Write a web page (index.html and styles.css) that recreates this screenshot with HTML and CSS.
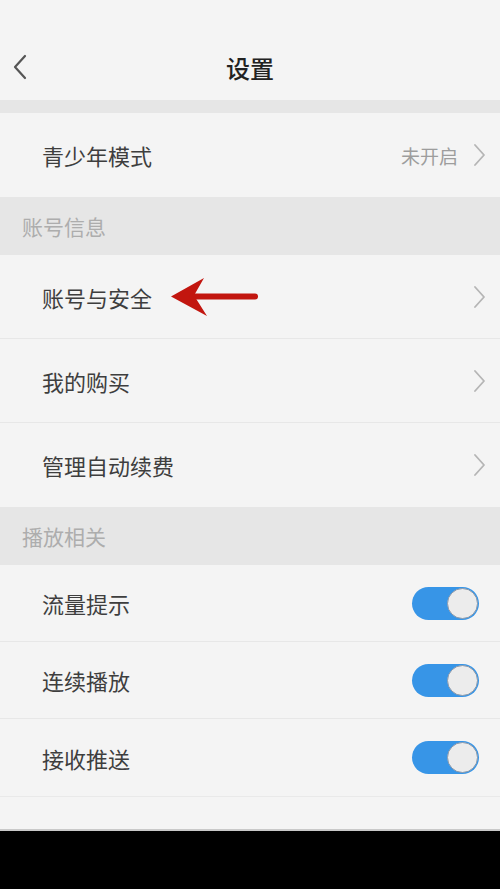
FILE: index.html
```html
<!doctype html>
<html lang="zh-CN">
    <head>
        <meta charset="UTF-8" />
        <meta name="viewport" content="width=device-width, initial-scale=1.0" />
        <title>设置</title>
        <link rel="stylesheet" href="styles.css">
    </head>
    <body>
        <header class="topbar">
            <button class="back" aria-label="返回">
                <svg viewBox="0 0 16 26" width="16" height="26">
                    <path d="M13 2 3 13l10 11" fill="none" stroke="#555" stroke-width="2.2" stroke-linecap="round" stroke-linejoin="round" />
                </svg>
            </button>
            <h1>设置</h1>
        </header>

        <div class="spacer"></div>

        <section class="group">
            <div class="row">
                <span class="label">青少年模式</span>
                <span class="value">未开启</span>
                <svg class="chev" viewBox="0 0 12 24" width="12" height="24">
                    <path d="M2 2l9 10-9 10" fill="none" stroke="#b5b5b5" stroke-width="1.8" stroke-linecap="round" stroke-linejoin="round" />
                </svg>
            </div>
        </section>

        <div class="section-title">账号信息</div>
        <section class="group">
            <div class="row tall marked">
                <span class="label">账号与安全</span>
                <svg class="chev" viewBox="0 0 12 24" width="12" height="24">
                    <path d="M2 2l9 10-9 10" fill="none" stroke="#b5b5b5" stroke-width="1.8" stroke-linecap="round" stroke-linejoin="round" />
                </svg>
                <!-- red annotation arrow -->
                <svg class="pointer" viewBox="0 0 90 42" width="90" height="42">
                    <path d="M1 20.5 34 2 24 19.5 37 40Z" fill="#c2160f" />
                    <path d="M22 20.5H85" stroke="#c2160f" stroke-width="6" stroke-linecap="round" />
                </svg>
            </div>
            <div class="row tall">
                <span class="label">我的购买</span>
                <svg class="chev" viewBox="0 0 12 24" width="12" height="24">
                    <path d="M2 2l9 10-9 10" fill="none" stroke="#b5b5b5" stroke-width="1.8" stroke-linecap="round" stroke-linejoin="round" />
                </svg>
            </div>
            <div class="row tall">
                <span class="label">管理自动续费</span>
                <svg class="chev" viewBox="0 0 12 24" width="12" height="24">
                    <path d="M2 2l9 10-9 10" fill="none" stroke="#b5b5b5" stroke-width="1.8" stroke-linecap="round" stroke-linejoin="round" />
                </svg>
            </div>
        </section>

        <div class="section-title">播放相关</div>
        <section class="group">
            <div class="row switch-row">
                <span class="label">流量提示</span>
                <span class="switch on"><span class="knob"></span></span>
            </div>
            <div class="row switch-row">
                <span class="label">连续播放</span>
                <span class="switch on"><span class="knob"></span></span>
            </div>
            <div class="row switch-row">
                <span class="label">接收推送</span>
                <span class="switch on"><span class="knob"></span></span>
            </div>
            <div class="row filler"></div>
        </section>

        <footer class="navbar"></footer>
    </body>
</html>
```

FILE: styles.css
```css
body,
html {
    margin: 0;
    padding: 0;
}

body {
    width: 500px;
    height: 889px;
    overflow: hidden;
    background-color: #f4f4f4;
    font-family: "Noto Sans CJK SC", "Noto Sans", sans-serif;
    color: #3c3c3c;
}

.topbar {
    height: 100px;
    box-sizing: border-box;
    padding-top: 50px;
    display: flex;
    justify-content: center;
    align-items: flex-start;
    position: relative;
}

.topbar h1 {
    margin: 0;
    font-size: 24px;
    line-height: 36px;
    font-weight: 500;
    color: #222;
}

.back {
    position: absolute;
    left: 12px;
    top: 54px;
    padding: 0;
    border: none;
    background: transparent;
    display: flex;
}

.spacer {
    height: 13px;
    background-color: #e6e6e6;
}

.section-title {
    height: 58px;
    display: flex;
    align-items: center;
    padding-left: 22px;
    background-color: #e6e6e6;
    color: #adadad;
    font-size: 21px;
}

.row {
    height: 84px;
    display: flex;
    align-items: center;
    padding: 0 15px 0 42px;
    border-bottom: 1px solid #e7e7e7;
    box-sizing: border-box;
    position: relative;
}

.group .row:last-child {
    border-bottom: none;
}

.label {
    flex: 1;
    font-size: 22px;
    color: #3e3e3e;
}

.value {
    font-size: 19px;
    color: #9d9d9d;
    margin-right: 15px;
}

.chev {
    display: block;
}

.marked .pointer {
    position: absolute;
    left: 170px;
    top: 21px;
}

.switch-row {
    height: 77px;
    padding-right: 21px;
}

.switch {
    width: 67px;
    height: 33px;
    border-radius: 17px;
    background-color: #3795e7;
    display: flex;
    align-items: center;
    justify-content: flex-end;
    box-sizing: border-box;
    padding: 1px;
}

.knob {
    width: 31px;
    height: 31px;
    border-radius: 50%;
    background-color: #ececec;
    box-sizing: border-box;
    border: 1.5px solid #8d9aab;
}

.group .row.filler {
    height: 33px;
    border-top: 1px solid #e9e9e9;
}

.switch-row:nth-last-child(2) {
    border-bottom: none;
}

.navbar {
    height: 58px;
    background-color: #000;
    border-top: 2px solid #c9c9c9;
}
```
